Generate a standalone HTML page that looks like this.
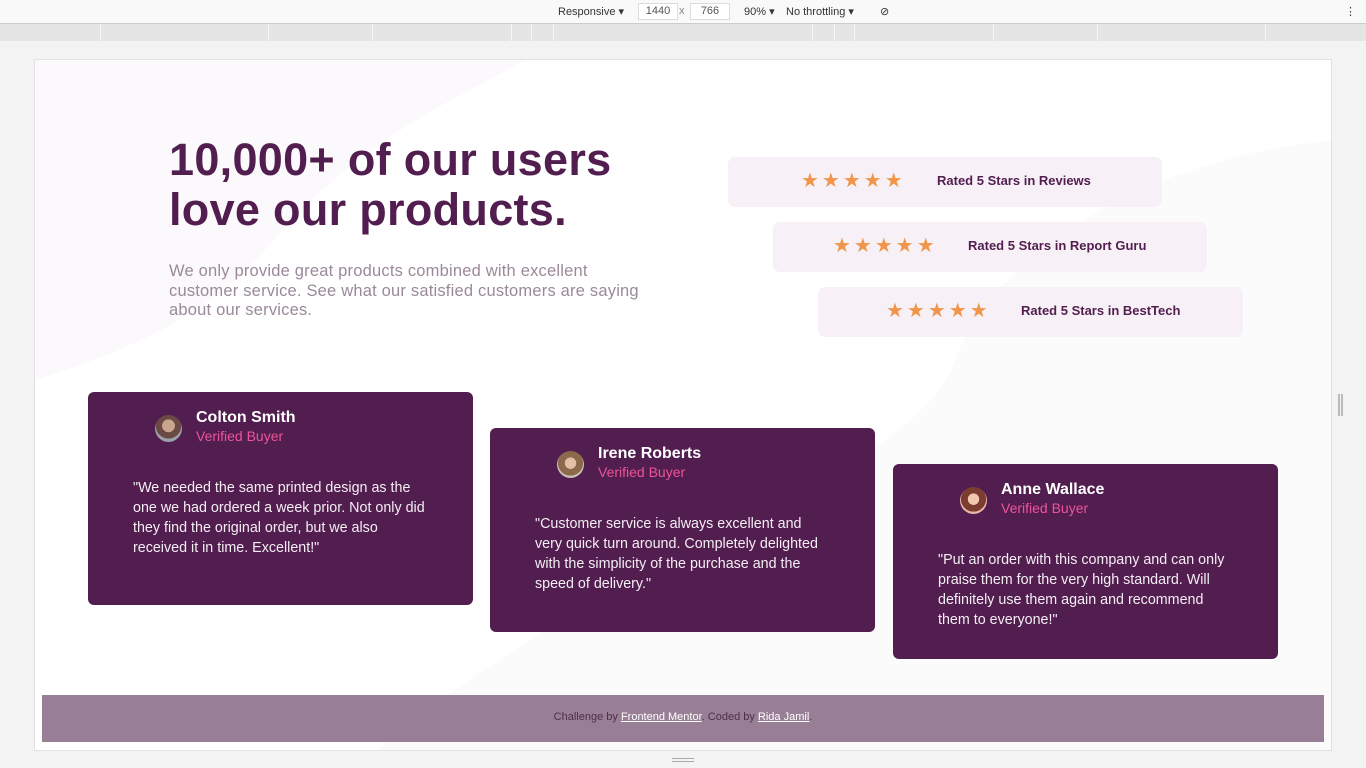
<!DOCTYPE html>
<html><head><meta charset="utf-8"><style>
*{margin:0;padding:0;box-sizing:border-box}
body{width:1366px;height:768px;background:#f3f3f3;font-family:"Liberation Sans",sans-serif;position:relative;overflow:hidden}
.top{position:absolute;left:0;top:0;width:1366px;height:24px;background:#f9f9f9;border-bottom:1px solid #ccc;font-size:11px;color:#333}
.top span{position:absolute;top:5px}
.top .in{position:absolute;top:3px;width:40px;height:17px;border:1px solid #ddd;background:#fff;text-align:center;line-height:15px;color:#555}
.ruler{position:absolute;left:0;top:24px;width:1366px;height:17px;background:#e5e5e5}
.ruler i{position:absolute;top:0;width:1px;height:17px;background:#f7f7f7}
.vp{position:absolute;left:34px;top:59px;width:1298px;height:692px;background:#fff;border:1px solid #e2e2e2;overflow:hidden}
.abs{position:absolute}
h1{position:absolute;left:134px;top:75px;font-size:45px;line-height:50px;color:#521d4f;font-weight:700;white-space:nowrap;letter-spacing:0.3px}
.lead{position:absolute;left:134px;top:202px;width:480px;font-size:16.5px;line-height:19.7px;color:#9a8a99;letter-spacing:0.2px}
.rate{position:absolute;width:434px;height:50px;background:#f7f1f7;border-radius:7px}
.rate .st{position:absolute;top:15px;font-size:20px;color:#f0954a;letter-spacing:3px;line-height:18px}
.rate b{position:absolute;top:16px;font-size:13px;color:#521d4f;white-space:nowrap}
.card{position:absolute;width:385px;background:#521d4f;border-radius:6px;color:#fff}
.av{position:absolute;left:67px;top:23px;width:27px;height:27px;border-radius:50%;background:radial-gradient(circle at 50% 40%,#c9a58e 0 30%,#6b4a45 31% 60%,#9aa1a8 61%)}
.nm{position:absolute;left:108px;top:17px;font-size:16px;font-weight:700;white-space:nowrap}
.vb{position:absolute;left:108px;top:36px;font-size:14px;color:#ec5598;white-space:nowrap}
.q{position:absolute;left:45px;top:86px;width:295px;font-size:14.3px;line-height:20px;color:#f4eef4}
.foot{position:absolute;left:7px;top:635px;width:1282px;height:47px;background:#987f96;font-size:11px;color:#4d2f4c;text-align:center;line-height:44px}
.foot a{color:#fff;text-decoration:underline}
</style></head><body>
<div class="top"><span style="left:558px">Responsive ▾</span><div class="in" style="left:638px">1440</div><span style="left:679px;color:#888">x</span><div class="in" style="left:690px">766</div><span style="left:744px">90% ▾</span><span style="left:786px">No throttling ▾</span><span style="left:880px">⊘</span><span style="left:1345px">⋮</span></div>
<div class="ruler"><i style="left:100px"></i><i style="left:268px"></i><i style="left:372px"></i><i style="left:511px"></i><i style="left:531px"></i><i style="left:553px"></i><i style="left:812px"></i><i style="left:834px"></i><i style="left:854px"></i><i style="left:993px"></i><i style="left:1097px"></i><i style="left:1265px"></i></div>
<div class="vp">
<svg class="abs" style="left:0;top:0" width="1298" height="692"><path d="M0 0 L490 0 C420 40 320 80 230 190 C160 270 60 300 0 320 Z" fill="#fbf9fb"/><path d="M1298 80 C1100 100 960 200 920 300 C880 420 560 500 340 692 L1298 692 Z" fill="#fcfbfc"/></svg>
<h1>10,000+ of our users<br>love our products.</h1>
<div class="lead">We only provide great products combined with excellent customer service. See what our satisfied customers are saying about our services.</div>
<div class="rate" style="left:693px;top:97px"><span class="st" style="left:73px">★★★★★</span><b style="left:209px">Rated 5 Stars in Reviews</b></div>
<div class="rate" style="left:738px;top:162px"><span class="st" style="left:60px">★★★★★</span><b style="left:195px">Rated 5 Stars in Report Guru</b></div>
<div class="rate" style="left:783px;top:227px;width:425px"><span class="st" style="left:68px">★★★★★</span><b style="left:203px">Rated 5 Stars in BestTech</b></div>
<div class="card" style="left:53px;top:332px;height:213px"><div class="av"></div><div class="nm">Colton Smith</div><div class="vb">Verified Buyer</div><div class="q">"We needed the same printed design as the one we had ordered a week prior. Not only did they find the original order, but we also received it in time. Excellent!"</div></div>
<div class="card" style="left:455px;top:368px;height:204px"><div class="av" style="background:radial-gradient(circle at 50% 45%,#e3c0a5 0 28%,#8a6a4a 29% 62%,#c9c0b5 63%)"></div><div class="nm">Irene Roberts</div><div class="vb">Verified Buyer</div><div class="q">"Customer service is always excellent and very quick turn around. Completely delighted with the simplicity of the purchase and the speed of delivery."</div></div>
<div class="card" style="left:858px;top:404px;height:195px"><div class="av" style="background:radial-gradient(circle at 50% 45%,#f0c8b0 0 28%,#7a3d30 29% 62%,#e9b8a8 63%)"></div><div class="nm">Anne Wallace</div><div class="vb">Verified Buyer</div><div class="q" style="width:295px">"Put an order with this company and can only praise them for the very high standard. Will definitely use them again and recommend them to everyone!"</div></div>
<div class="foot">Challenge by <a>Frontend Mentor</a>. Coded by <a>Rida Jamil</a>.</div>
</div>
<div class="abs" style="left:672px;top:758px;width:22px;height:1px;background:#aaa"></div><div class="abs" style="left:672px;top:761px;width:22px;height:1px;background:#aaa"></div>
<div class="abs" style="left:1338px;top:394px;width:2px;height:22px;background:#bbb"></div><div class="abs" style="left:1341px;top:394px;width:2px;height:22px;background:#bbb"></div>
</body></html>
